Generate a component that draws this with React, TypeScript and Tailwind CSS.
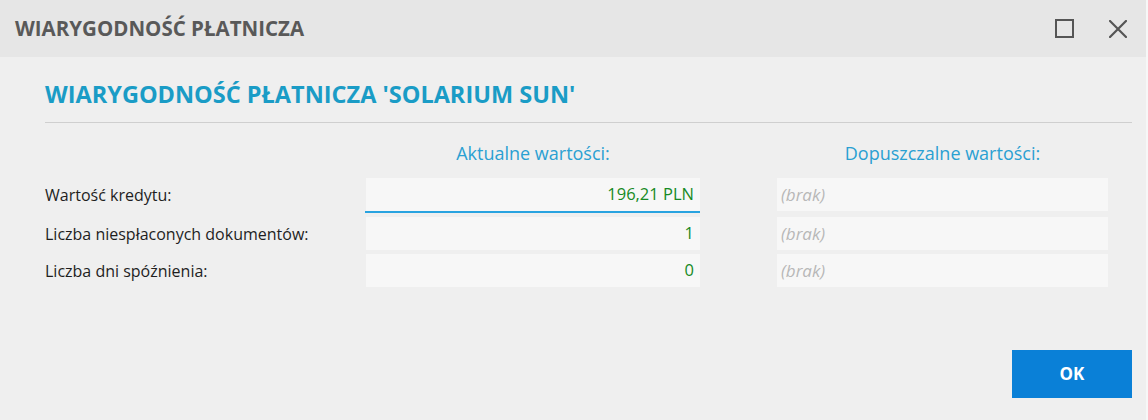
const rows = [
  { label: 'Wartość kredytu:', value: '196,21 PLN', active: true },
  { label: 'Liczba niespłaconych dokumentów:', value: '1', active: false },
  { label: 'Liczba dni spóźnienia:', value: '0', active: false },
];

function TitleBar() {
  return (
    <div className="flex items-center justify-between h-[57px] bg-[#e6e6e6] pl-[15px] pr-[19px]">
      <h1 className="text-[20.5px] font-bold text-[#595959]">WIARYGODNOŚĆ PŁATNICZA</h1>
      <div className="flex items-center gap-[35px]">
        <div className="w-[19px] h-[19px] border-2 border-[#555]" />
        <svg width="18" height="18" viewBox="0 0 18 18" className="text-[#555]">
          <path d="M1 1L17 17M17 1L1 17" stroke="currentColor" strokeWidth="2.2" strokeLinecap="square" />
        </svg>
      </div>
    </div>
  );
}

function ValueRow({ label, value, active }: { label: string; value: string; active: boolean }) {
  return (
    <div className="flex items-start">
      <div className="w-[321px] h-[33px] flex items-center text-[16px] text-[#1e1e1e]">{label}</div>
      <div className="w-[334px]">
        <div className="h-[33px] bg-[#f7f7f7] flex items-center justify-end pr-[6px] text-[16.5px] text-[#168a24]">
          {value}
        </div>
        {active && <div className="h-[2px] bg-[#29a3e0] -ml-px" />}
      </div>
      <div className="ml-[77px] w-[331px] h-[33px] bg-[#f7f7f7] flex items-center pl-[4px] text-[17px] italic text-[#b8b8b8]">
        (brak)
      </div>
    </div>
  );
}

export default function App() {
  return (
    <div
      className="w-[1148px] h-[420px] bg-[#efefef] flex flex-col border-r-2 border-[#f7f7f7]"
      style={{ fontFamily: '"Open Sans", "Noto Sans", sans-serif' }}
    >
      <TitleBar />
      <div className="flex-1 flex flex-col pl-[45px] pr-[14px]">
        <h2 className="mt-[22px] text-[23.5px] leading-[30px] font-bold text-[#1a9cc6]">
          WIARYGODNOŚĆ PŁATNICZA 'SOLARIUM SUN'
        </h2>
        <div className="mt-[13px] h-px bg-[#cfcfcf]" />
        <div className="flex mt-[18px] text-[18px] leading-[24px] text-[#2aa0d2]">
          <div className="w-[321px]" />
          <div className="w-[334px] text-center">Aktualne wartości:</div>
          <div className="ml-[77px] w-[331px] text-center">Dopuszczalne wartości:</div>
        </div>
        <div className="mt-[13px] flex flex-col gap-[4px]">
          {rows.map((r) => (
            <ValueRow key={r.label} {...r} />
          ))}
        </div>
        <div className="mt-auto mb-[22px] flex justify-end">
          <button className="w-[120px] h-[48px] bg-[#0a80d7] text-white font-bold text-[17px]">OK</button>
        </div>
      </div>
    </div>
  );
}
